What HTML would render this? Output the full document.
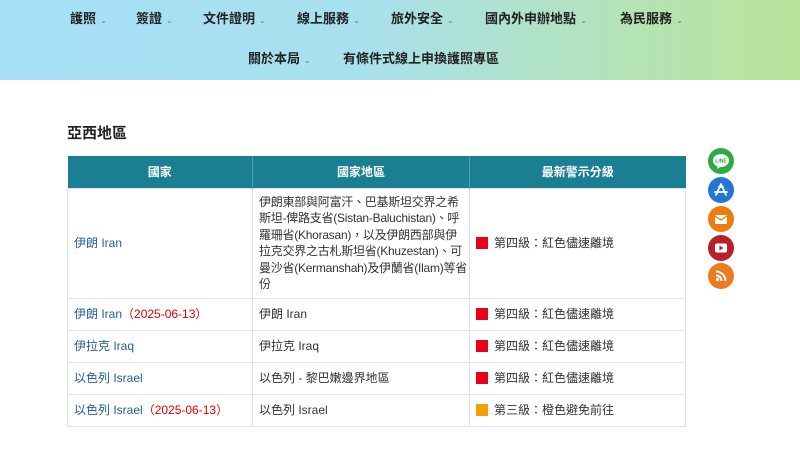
<!DOCTYPE html>
<html><head><meta charset="utf-8"><style>
*{margin:0;padding:0;box-sizing:border-box}
body{width:800px;height:469px;overflow:hidden;background:#fff;font-family:"Liberation Sans","Noto Sans CJK TC",sans-serif;color:#333;position:relative}
.hdr{position:absolute;left:0;top:0;width:800px;height:80px;background:linear-gradient(90deg,#a6e0f7 0%,#a9e0ee 45%,#b4e3b4 80%,#bae49a 100%)}
.nav{position:absolute;top:8px;font-size:13px;font-weight:bold;color:#222;white-space:nowrap}
.nav span{font-size:8px;color:#777;margin-left:4px;font-weight:normal}
h2{position:absolute;left:67px;top:122px;font-size:15px;font-weight:bold;color:#222}
table{position:absolute;left:67px;top:156px;width:619px;border-collapse:collapse;font-size:12px}
th{background:#1b7f93;color:#fff;height:32px;font-weight:bold;border-left:1px solid #4f9fb0}
td{border:1px solid #e2e2e2;padding:0 6px;height:32px;line-height:18px}
td.w{padding:0 2px 0 6px;letter-spacing:-0.25px;line-height:16.5px}
a{color:#2a5c9a;text-decoration:none}
.r{color:#d00}
.sq{display:inline-block;width:12px;height:12px;background:#e8001b;vertical-align:-2px;margin-right:6px}
.o{background:#f5a000}
.ic{position:absolute;left:708px;width:26px;height:26px;border-radius:50%;color:#fff;font-size:9px;text-align:center;line-height:26px;font-weight:bold}
.ic svg{position:absolute;left:0;top:0}
</style></head><body>
<div class="hdr">
<div class="nav" style="left:70px">護照<span>⌄</span></div>
<div class="nav" style="left:136px">簽證<span>⌄</span></div>
<div class="nav" style="left:203px">文件證明<span>⌄</span></div>
<div class="nav" style="left:297px">線上服務<span>⌄</span></div>
<div class="nav" style="left:391px">旅外安全<span>⌄</span></div>
<div class="nav" style="left:485px">國內外申辦地點<span>⌄</span></div>
<div class="nav" style="left:620px">為民服務<span>⌄</span></div>
<div class="nav" style="left:248px;top:48px">關於本局<span>⌄</span></div>
<div class="nav" style="left:343px;top:48px">有條件式線上申換護照專區</div>
</div>
<h2>亞西地區</h2>
<table>
<tr><th style="width:185px;border-left:none">國家</th><th style="width:217px">國家地區</th><th>最新警示分級</th></tr>
<tr><td style="height:110px"><a>伊朗 Iran</a></td><td class="w">伊朗東部與阿富汗、巴基斯坦交界之希斯坦-俾路支省(Sistan-Baluchistan)、呼羅珊省(Khorasan)，以及伊朗西部與伊拉克交界之古札斯坦省(Khuzestan)、可曼沙省(Kermanshah)及伊蘭省(Ilam)等省份</td><td><i class="sq"></i>第四級：紅色儘速離境</td></tr>
<tr><td><a>伊朗 Iran</a><span class="r">（2025-06-13）</span></td><td>伊朗 Iran</td><td><i class="sq"></i>第四級：紅色儘速離境</td></tr>
<tr><td><a>伊拉克 Iraq</a></td><td>伊拉克 Iraq</td><td><i class="sq"></i>第四級：紅色儘速離境</td></tr>
<tr><td><a>以色列 Israel</a></td><td>以色列 - 黎巴嫩邊界地區</td><td><i class="sq"></i>第四級：紅色儘速離境</td></tr>
<tr><td><a>以色列 Israel</a><span class="r">（2025-06-13）</span></td><td>以色列 Israel</td><td><i class="sq o"></i>第三級：橙色避免前往</td></tr>
</table>
<div class="ic" style="top:148px;background:#2eaa44"><svg width="26" height="26"><ellipse cx="13" cy="12.5" rx="8" ry="6.5" fill="#fff"/><path d="M10 17 L9 21 L14 18Z" fill="#fff"/><text x="13" y="14.5" font-size="5" fill="#2eaa44" text-anchor="middle" font-family="Liberation Sans" font-weight="bold">LINE</text></svg></div>
<div class="ic" style="top:177px;background:#2477d0"><svg width="26" height="26"><path d="M13 7 L8 18 M13 7 L18 18 M7 15 H19 M11 10 L15 10" stroke="#fff" stroke-width="1.8" fill="none" stroke-linecap="round"/></svg></div>
<div class="ic" style="top:206px;background:#ee7c0c"><svg width="26" height="26"><rect x="7" y="9" width="12" height="9" rx="1" fill="#fff"/><path d="M7 10 L13 14 L19 10" stroke="#ee7c0c" stroke-width="1.3" fill="none"/></svg></div>
<div class="ic" style="top:235px;background:#b8202a"><svg width="26" height="26"><rect x="7" y="8.5" width="12" height="9" rx="2" fill="#fff"/><path d="M11.5 10.5 L15.5 13 L11.5 15.5Z" fill="#b8202a"/></svg></div>
<div class="ic" style="top:263px;background:#ec7a1e"><svg width="26" height="26"><circle cx="9.5" cy="16.5" r="1.6" fill="#fff"/><path d="M8 12.5 A5.5 5.5 0 0 1 13.5 18 M8 8.5 A9.5 9.5 0 0 1 17.5 18" stroke="#fff" stroke-width="2" fill="none"/></svg></div>
</body></html>
